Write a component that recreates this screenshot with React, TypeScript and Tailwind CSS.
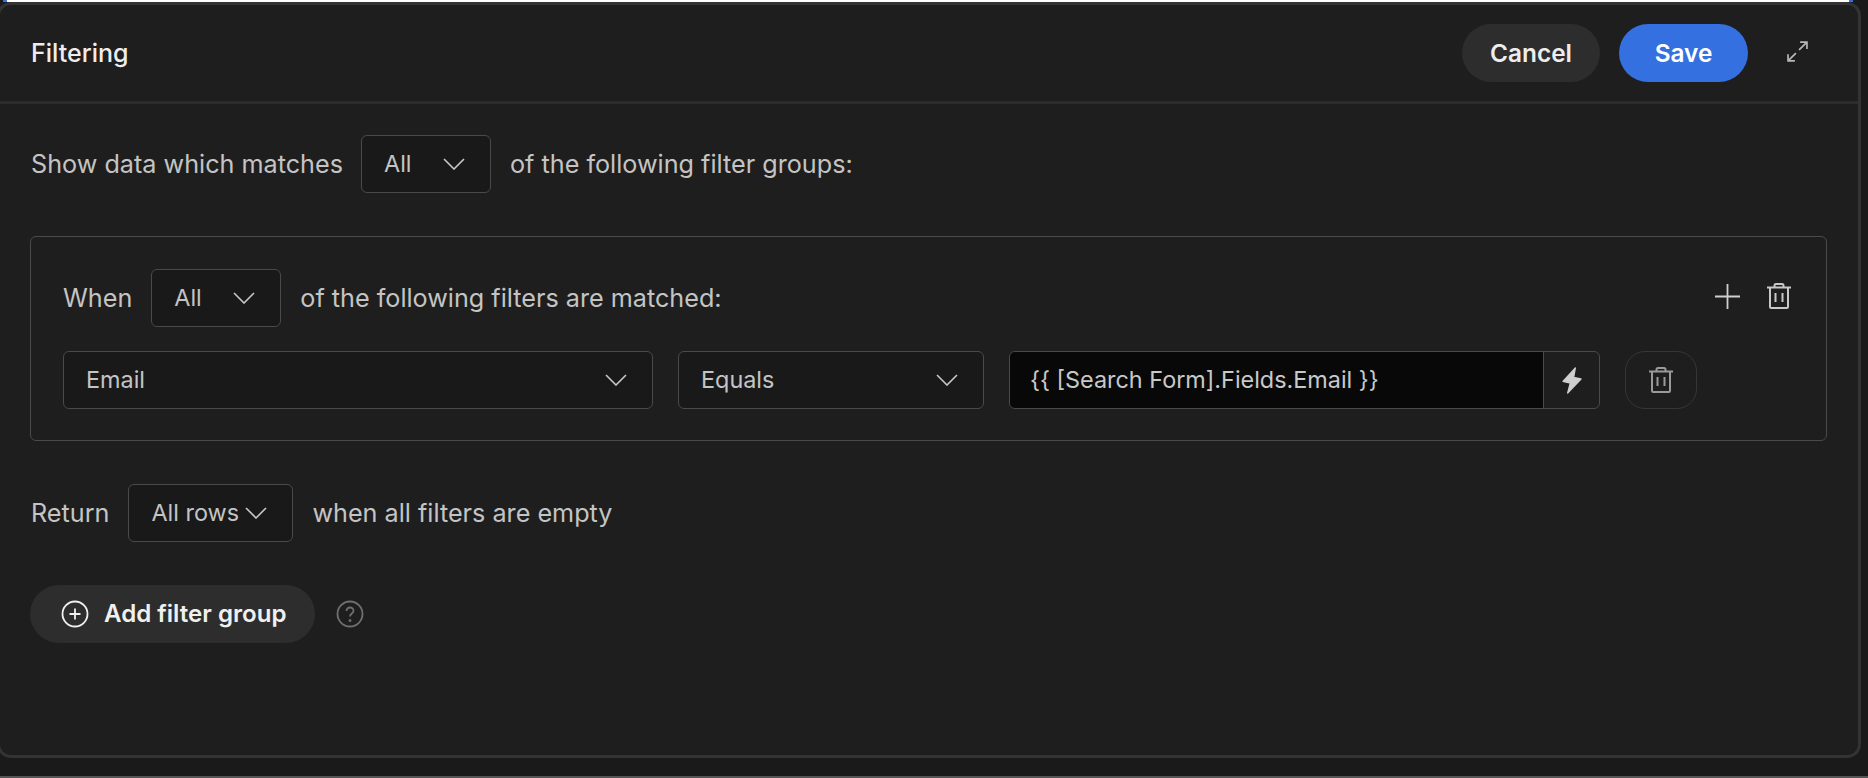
function Select({ label, className }: { label: string; className: string }) {
  return (
    <div className={`h-[58px] shrink-0 flex items-center justify-between rounded-[6px] border border-[#4a4a4a] bg-[#191919] pl-[22px] pr-[25px] text-[23.4px] text-[#c4c4c4] ${className}`}>
      <span>{label}</span>
      <svg viewBox="0 0 22 12" fill="none" stroke="currentColor" strokeWidth="1.600" className="w-[22px] h-[12px] shrink-0 text-[#c8c8c8]">
        <path d="M1 1l10 10L21 1" />
      </svg>
    </div>
  )
}

function TrashIcon({ className }: { className: string }) {
  return (
    <svg viewBox="0 0 24 26" fill="none" stroke="currentColor" strokeWidth="2" className={className}>
      <path d="M0 4.500h24" />
      <path d="M7.500 4V2.500C7.500 1.500 8.200 1 9 1h6c.8 0 1.500.5 1.500 1.500V4" />
      <path d="M3 5v19c0 .7.5 1 1.200 1h15.600c.7 0 1.200-.3 1.200-1V5" />
      <path d="M8.500 10v9M15.500 10v9" />
    </svg>
  )
}

export default function App() {
  return (
    <div className="h-[778px] w-[1868px] overflow-hidden flex flex-col bg-[#1a1a1a] text-[25.2px] text-[#c4c4c4] [font-family:Inter,sans-serif]">
      <div className="h-[2px] shrink-0 flex pl-[3px] pr-[15px]">
        <div className="w-[4px] bg-[#3470e0]" />
        <div className="flex-1 bg-white" />
        <div className="w-[4px] bg-[#3470e0]" />
      </div>
      <div className="flex-1 -ml-[3px] mr-[7px] mb-[18px] border-[3px] border-[#333333] rounded-[14px] bg-[#1e1e1e] flex flex-col min-h-0">
        <header className="h-[99px] shrink-0 border-b-[3px] border-[#2c2c2c] flex items-center pl-[31px]">
          <h1 className="pt-[2px] text-[25px] font-medium text-[#ededed]">Filtering</h1>
          <div className="ml-auto flex items-center text-[24.4px]">
            <button className="h-[58px] w-[138px] rounded-full bg-[#2d2d2d] text-[#ededed] font-semibold">Cancel</button>
            <button className="h-[58px] w-[129px] ml-[19px] rounded-full bg-[#3570e0] text-white font-semibold">Save</button>
            <svg viewBox="0 0 20 20" fill="none" stroke="currentColor" strokeWidth="1.600" className="w-[21px] h-[21px] -mt-[3px] ml-[39px] mr-[50px] text-[#b8b8b8]">
              <path d="M12.500 1h6.500v6.500M19 1L11.500 8.500M1 12.500V19h6.500M1 19l7.500-7.500" />
            </svg>
          </div>
        </header>
        <main className="flex-1 pl-[30px] pr-[31px] pt-[31px]">
          <div className="flex items-center">
            <span className="ml-[1px] pt-[2px]">Show data which matches</span>
            <Select label="All" className="w-[130px] ml-[18px]" />
            <span className="ml-[19px] pt-[2px]">of the following filter groups:</span>
          </div>
          <section className="mt-[43px] h-[205px] rounded-[6px] border border-[#4a4a4a] pl-[32px] pr-[35px] pt-[32px]">
            <div className="flex items-center">
              <span className="pt-[1px]">When</span>
              <Select label="All" className="w-[130px] ml-[19px]" />
              <span className="ml-[19px] pt-[1px]">of the following filters are matched:</span>
              <div className="ml-auto -mt-[4px] flex items-center gap-[27px]">
                <svg viewBox="0 0 25 25" fill="none" stroke="currentColor" strokeWidth="1.800" className="w-[25px] h-[25px] text-[#cfcfcf]">
                  <path d="M12.500 0v25M0 12.500h25" />
                </svg>
                <TrashIcon className="w-[24px] h-[26px] text-[#c8c8c8]" />
              </div>
            </div>
            <div className="mt-[24px] flex items-center">
              <Select label="Email" className="w-[590px]" />
              <Select label="Equals" className="w-[306px] ml-[25px]" />
              <div className="h-[58px] w-[591px] ml-[25px] flex rounded-[6px] border border-[#4a4a4a] overflow-hidden text-[23.4px]">
                <div className="flex-1 bg-[#080808] flex items-center pl-[20px] text-[#c8c8c8]">{'{{ [Search Form].Fields.Email }}'}</div>
                <div className="w-[56px] border-l border-[#4a4a4a] flex items-center justify-center">
                  <svg viewBox="0 0 60 81" stroke="currentColor" strokeWidth="4" strokeLinejoin="round" fill="currentColor" className="w-[20px] h-[27px] text-[#cfcfcf]">
                    <path d="M40 3L3 43l22 5-8 30 40-42-22-5z" />
                  </svg>
                </div>
              </div>
              <div className="h-[58px] w-[72px] ml-[25px] rounded-[20px] border border-[#363636] flex items-center justify-center">
                <TrashIcon className="w-[24px] h-[26px] text-[#9a9a9a]" />
              </div>
            </div>
          </section>
          <div className="mt-[43px] flex items-center">
            <span className="ml-[1px] pt-[2px]">Return</span>
            <Select label="All rows" className="w-[165px] ml-[19px]" />
            <span className="ml-[19px] pt-[2px]">when all filters are empty</span>
          </div>
          <div className="mt-[43px] flex items-center">
            <button className="h-[58px] w-[285px] rounded-full bg-[#2d2d2d] flex items-center pl-[31px] text-[24.1px] text-[#f0f0f0] font-semibold">
              <svg viewBox="0 0 28 28" fill="none" stroke="currentColor" strokeWidth="1.800" className="w-[28px] h-[28px] mr-[15px]">
                <circle cx="14" cy="14" r="12.500" />
                <path d="M14 8.500v11M8.500 14h11" />
              </svg>
              Add filter group
            </button>
            <svg viewBox="0 0 28 28" fill="none" stroke="currentColor" strokeWidth="1.800" className="w-[28px] h-[28px] ml-[21px] text-[#6f6f6f]">
              <circle cx="14" cy="14" r="12.500" />
              <path d="M10.500 11c0-2 1.600-3.500 3.500-3.500s3.500 1.500 3.500 3.300c0 2.700-3.500 2.700-3.500 5.700" />
              <circle cx="14" cy="20.500" r=".6" />
            </svg>
          </div>
        </main>
      </div>
      <div className="h-[2px] shrink-0 bg-[#555555]" />
    </div>
  )
}
